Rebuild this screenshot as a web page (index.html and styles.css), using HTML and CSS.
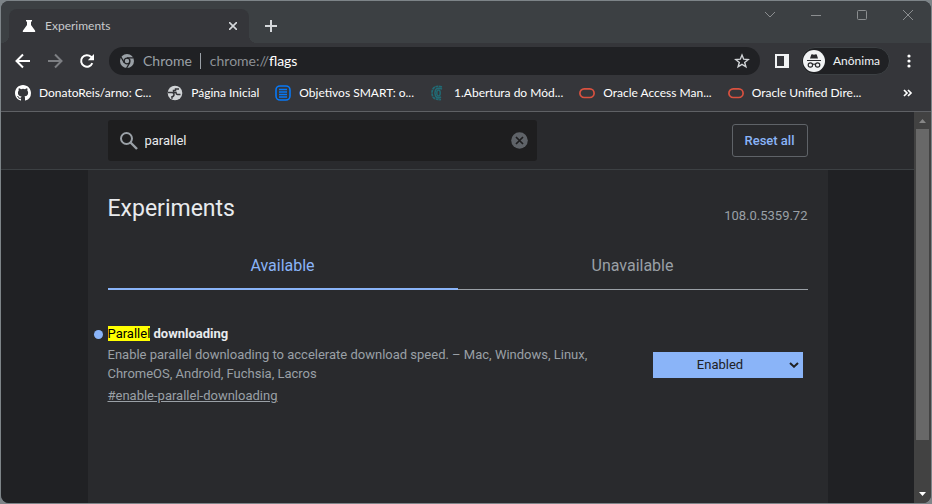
FILE: index.html
```html
<!DOCTYPE html>
<html lang="en">
<head>
<meta charset="utf-8">
<title>Experiments</title>
<link rel="stylesheet" href="styles.css">
</head>
<body>
<div class="window">
  <div class="tabstrip">
    <div class="tab">
      <svg class="tab-icon" width="14" height="14" viewBox="0 0 14 14"><path fill="#fff" d="M4 1h6v1.500H9V6l4 5.500c.6 1 .2 1.500-1 1.500H2c-1.200 0-1.600-.5-1-1.500L5 6V2.500H4z"/></svg>
      <span class="tab-title">Experiments</span>
      <button class="icon-button tab-close" aria-label="Close tab"><svg width="8" height="8" viewBox="0 0 8 8"><path d="M0 0l8 8M8 0L0 8" stroke="#d5d8db" stroke-width="1.600"/></svg></button>
    </div>
    <button class="icon-button new-tab" aria-label="New tab"><svg width="12" height="12" viewBox="0 0 12 12"><path d="M6 0v12M0 6h12" stroke="#d5d8db" stroke-width="2"/></svg></button>
    <div class="window-controls">
      <button class="icon-button" aria-label="Search tabs"><svg width="12" height="12" viewBox="0 0 12 12"><path d="M1 3l5 5 5-5" fill="none" stroke="#8b8e90"/></svg></button>
      <button class="icon-button" aria-label="Minimize"><svg width="12" height="12" viewBox="0 0 12 12"><path d="M1 6.500h10" stroke="#8b8e90"/></svg></button>
      <button class="icon-button" aria-label="Maximize"><svg width="12" height="12" viewBox="0 0 12 12"><rect x="1.500" y="1.500" width="9" height="9" rx="1" fill="none" stroke="#8b8e90"/></svg></button>
      <button class="icon-button" aria-label="Close"><svg width="12" height="12" viewBox="0 0 12 12"><path d="M1 1l10 10M11 1L1 11" stroke="#8b8e90"/></svg></button>
    </div>
  </div>

  <div class="toolbar">
    <div class="nav">
      <button class="icon-button" aria-label="Back"><svg width="16" height="16" viewBox="0 0 16 16"><path d="M15 8H2M8 1.500L1.500 8 8 14.500" fill="none" stroke="#fff" stroke-width="2"/></svg></button>
      <button class="icon-button" aria-label="Forward"><svg width="16" height="16" viewBox="0 0 16 16"><path d="M1 8h13M8 1.500L14.500 8 8 14.500" fill="none" stroke="#7d7f83" stroke-width="2"/></svg></button>
      <button class="icon-button" aria-label="Reload"><svg width="16" height="16" viewBox="0 0 16 16"><path d="M13.300 10.200A5.800 5.800 0 1 1 12 3.800L14 5.800" fill="none" stroke="#fff" stroke-width="2"/><path d="M15 1v6.200H8.800z" fill="#fff"/></svg></button>
    </div>
    <div class="omnibox">
      <svg width="14" height="14" viewBox="0 0 14 14"><circle cx="7" cy="7" r="7" fill="#9aa0a6"/><circle cx="7" cy="7" r="2.900" fill="none" stroke="#202124" stroke-width="1.400"/><path d="M7 3.900h6.500M4.200 8.600L1 3M9.800 8.600L6.600 14" stroke="#202124" stroke-width="1.300"/></svg>
      <span class="site">Chrome</span>
      <span class="divider"></span>
      <span class="url">chrome://<b>flags</b></span>
      <button class="icon-button star" aria-label="Bookmark this page"><svg width="16" height="16" viewBox="0 0 16 16"><path d="M8 2l1.700 4.200 4.500.3-3.500 2.900 1.200 4.400L8 11.400l-3.900 2.400 1.200-4.400L1.800 6.500l4.500-.3z" fill="none" stroke="#d0d3d6" stroke-width="1.400"/></svg></button>
    </div>
    <button class="icon-button side-panel" aria-label="Side panel"><svg width="14" height="14" viewBox="0 0 14 14"><path fill="#f1f3f4" fill-rule="evenodd" d="M0 0h14v14H0zM2 2v10h7V2z"/></svg></button>
    <button class="profile"><svg width="22" height="22" viewBox="0 0 22 22"><circle cx="11" cy="11" r="11" fill="#f1f3f4"/><path d="M7 8.500l1.200-3.800q.2-.7.900-.4l1.900.4 1.900-.4q.7-.3.900.4L15 8.500z" fill="#292a2d"/><path d="M4 10.500h14M9.600 14.500q1.400-1 2.800 0" fill="none" stroke="#292a2d" stroke-width="1.200"/><circle cx="7.400" cy="15" r="2.200" fill="none" stroke="#292a2d" stroke-width="1.200"/><circle cx="14.600" cy="15" r="2.200" fill="none" stroke="#292a2d" stroke-width="1.200"/></svg><span>Anônima</span></button>
    <button class="icon-button menu" aria-label="Menu"><svg width="4" height="14" viewBox="0 0 4 14"><g fill="#fff"><circle cx="2" cy="2" r="1.600"/><circle cx="2" cy="7" r="1.600"/><circle cx="2" cy="12" r="1.600"/></g></svg></button>
  </div>

  <nav class="bookmarks" aria-label="Bookmarks">
    <a class="bookmark" href="#"><svg width="16" height="16" viewBox="0 0 16 16"><path fill="#fff" d="M8 0C3.580 0 0 3.580 0 8c0 3.540 2.290 6.530 5.470 7.590.4.070.55-.17.55-.38 0-.19-.01-.82-.01-1.490-2.010.37-2.530-.49-2.690-.94-.09-.23-.48-.94-.82-1.130-.28-.15-.68-.52-.01-.53.630-.01 1.080.58 1.230.82.720 1.210 1.870.87 2.330.66.070-.52.280-.87.510-1.070-1.780-.2-3.640-.89-3.640-3.950 0-.87.310-1.590.82-2.150-.08-.2-.36-1.020.08-2.120 0 0 .67-.21 2.200.82a7.600 7.600 0 0 1 4 0c1.530-1.040 2.200-.82 2.200-.82.440 1.100.16 1.920.08 2.120.51.560.82 1.270.82 2.150 0 3.070-1.870 3.750-3.650 3.950.29.25.54.73.54 1.480 0 1.070-.01 1.930-.01 2.200 0 .21.150.46.550.38A8 8 0 0 0 16 8c0-4.420-3.580-8-8-8z"/></svg><span>DonatoReis/arno: C...</span></a>
    <a class="bookmark" href="#"><svg width="16" height="16" viewBox="0 0 16 16"><circle cx="8" cy="8" r="7.300" fill="#d0d3d6"/><path fill="none" stroke="#35363a" stroke-width="1.500" d="M1 7.500h3.500q2.500 0 2.500 2t-2 2.200v2M13.500 9.500h-3q-1.500-.2-1.500-2H6.500V5.500h2V4H12"/></svg><span>Página Inicial</span></a>
    <a class="bookmark" href="#"><svg width="16" height="16" viewBox="0 0 16 16"><rect x="1" y="1" width="14" height="14" rx="4" fill="none" stroke="#0878f5" stroke-width="1.600"/><path d="M4 4.500h8M4 7h8M4 9.500h8M4 12h8" stroke="#0878f5" stroke-width="1.300"/></svg><span>Objetivos SMART: o...</span></a>
    <a class="bookmark" href="#"><svg width="16" height="16" viewBox="0 0 16 16"><g fill="none" stroke="#216a74"><path d="M12 2Q5 0 3 4T3 12q2 3 8 2.500" stroke-width="1.700" stroke-dasharray="3 .6"/><path d="M12 4Q7 2 5.500 5C4.700 7 4.700 9 5.500 11q2 3 5.500 1" stroke-width="1.600"/><ellipse cx="8.500" cy="8" rx="1.700" ry="3" stroke-width="1.500"/></g></svg><span>1.Abertura do Mód...</span></a>
    <a class="bookmark" href="#"><svg width="16" height="16" viewBox="0 0 16 16"><rect x=".9" y="3.900" width="14.200" height="8.600" rx="4.300" fill="none" stroke="#d9513f" stroke-width="1.700"/></svg><span>Oracle Access Man...</span></a>
    <a class="bookmark" href="#"><svg width="16" height="16" viewBox="0 0 16 16"><rect x=".9" y="3.900" width="14.200" height="8.600" rx="4.300" fill="none" stroke="#d9513f" stroke-width="1.700"/></svg><span>Oracle Unified Dire...</span></a>
    <button class="icon-button more" aria-label="More bookmarks"><svg width="10" height="8" viewBox="0 0 10 8"><path d="M1 1l3 3-3 3M5 1l3 3-3 3" fill="none" stroke="#fff" stroke-width="1.700"/></svg></button>
  </nav>

  <div class="viewport">
    <div class="page">
      <header class="page-header">
        <div class="header-inner">
          <label class="search">
            <svg width="18" height="18" viewBox="0 0 18 18"><circle cx="6.500" cy="6.500" r="5.500" fill="none" stroke="#9aa0a6" stroke-width="2"/><path d="M10.500 10.500l6.500 6.500" stroke="#9aa0a6" stroke-width="2.400"/></svg>
            <input type="text" value="parallel" aria-label="Search flags">
            <button class="icon-button" aria-label="Clear search"><svg width="17" height="17" viewBox="0 0 17 17"><circle cx="8.500" cy="8.500" r="8.300" fill="#5f6368"/><path d="M5 5l7 7M12 5l-7 7" stroke="#1e1e1f" stroke-width="1.700"/></svg></button>
          </label>
          <button class="reset">Reset all</button>
        </div>
      </header>
      <main class="card">
        <div class="title-row">
          <h1>Experiments</h1>
          <span class="version">108.0.5359.72</span>
        </div>
        <div class="tabs" role="tablist">
          <button class="page-tab selected" role="tab" aria-selected="true">Available</button>
          <button class="page-tab" role="tab" aria-selected="false">Unavailable</button>
        </div>
        <section class="experiment">
          <div class="details">
            <h2><label for="flag-state"><mark>Parallel</mark> downloading</label></h2>
            <p>Enable parallel downloading to accelerate download speed. – Mac, Windows, Linux, ChromeOS, Android, Fuchsia, Lacros</p>
            <a class="permalink" href="#enable-parallel-downloading">#enable-parallel-downloading</a>
          </div>
          <div class="select-wrap">
            <select id="flag-state"><option>Default</option><option selected>Enabled</option><option>Disabled</option></select>
            <svg width="10" height="6" viewBox="0 0 10 6"><path d="M1 .9L5 4.700 9 .9" fill="none" stroke="#202124" stroke-width="2"/></svg>
          </div>
        </section>
      </main>
    </div>
    <div class="scrollbar" aria-hidden="true">
      <svg width="17" height="17" viewBox="0 0 17 17"><path d="M5 11l3.500-4L12 11z" fill="#868686"/></svg>
      <div class="track"><div class="thumb"></div></div>
      <svg width="17" height="17" viewBox="0 0 17 17"><path d="M5 6h7l-3.500 4z" fill="#fff"/></svg>
    </div>
  </div>
</div>
</body>
</html>
```
FILE: styles.css
```css
* { box-sizing: border-box; }

body {
  margin: 0;
  height: 100vh;
  padding: 1px;
  background: #7d8488;
  font-family: Lato, "Open Sans", sans-serif;
  font-size: 12px;
}

button, input, select { font: inherit; }

svg { display: block; flex: none; }

.icon-button {
  display: flex;
  flex: none;
  align-items: center;
  justify-content: center;
  padding: 0;
  border: 0;
  background: none;
}

.window {
  display: flex;
  flex-direction: column;
  height: 100%;
  overflow: hidden;
  border-radius: 8px;
  background: #35363a;
}

/* Tab strip */
.tabstrip {
  display: flex;
  height: 42px;
  padding: 8px 0 0 8px;
  background: #3c4043;
}

.tab {
  position: relative;
  display: flex;
  align-items: center;
  width: 240px;
  padding: 0 12px 0 13px;
  border-radius: 8px 8px 0 0;
  background: #35363a;
}

.tab::before,
.tab::after {
  content: "";
  position: absolute;
  bottom: 0;
  width: 8px;
  height: 8px;
}

.tab::before {
  right: 100%;
  background: radial-gradient(circle at 0 0, transparent 8px, #35363a 8px);
}

.tab::after {
  left: 100%;
  background: radial-gradient(circle at 100% 0, transparent 8px, #35363a 8px);
}

.tab-title { margin-left: 9px; padding-bottom: 2px; color: #c8cacc; }
.tab-close { margin-left: auto; }
.new-tab { width: 44px; }

.window-controls {
  display: flex;
  align-items: flex-start;
  margin-left: auto;
}

.window-controls .icon-button { width: 46px; height: 12px; }

/* Toolbar */
.toolbar {
  display: flex;
  align-items: center;
  height: 36px;
  padding: 0 20px 0 14px;
}

.nav { display: flex; gap: 16px; }

.omnibox {
  display: flex;
  flex: 1;
  align-items: center;
  height: 28px;
  margin-left: 14px;
  padding: 0 10px 0 11px;
  border-radius: 14px;
  background: #202124;
  color: #9aa0a6;
  font-size: 14px;
}

.site { margin-left: 9px; padding-bottom: 2px; }
.divider { width: 1px; height: 16px; margin: 0 9px 0 8px; background: #9aa0a6; }
.url { padding-bottom: 2px; color: #8d9196; }
.url b { color: #fff; font-weight: 400; }
.star { margin-left: auto; }
.side-panel { margin-left: 15px; }

.profile {
  display: flex;
  align-items: center;
  gap: 8px;
  height: 28px;
  margin-left: 12px;
  padding: 0 9px 0 1px;
  border: 1px solid #3c4043;
  border-radius: 14px;
  background: #202124;
  color: #f1f3f4;
}

.profile span { padding-bottom: 2px; }
.menu { margin-left: 17px; }

/* Bookmarks */
.bookmarks {
  display: flex;
  align-items: center;
  gap: 16px;
  height: 33px;
  padding: 0 18px 4px 14px;
  border-bottom: 1px solid #5f6165;
}

.bookmark {
  display: flex;
  flex: none;
  align-items: center;
  gap: 8px;
  color: #fff;
  text-decoration: none;
  white-space: nowrap;
}

.bookmark span { padding-bottom: 2px; }
.more { margin-left: auto; }

/* Page */
.viewport {
  display: flex;
  flex: 1;
  min-height: 0;
}

.page {
  display: flex;
  flex: 1;
  flex-direction: column;
  background: #202124;
  color: #9aa0a6;
  font-family: Roboto, sans-serif;
  font-size: 13px;
}

.page-header {
  padding: 8px 0;
  border-bottom: 1px solid #3c4043;
  background: #292a2d;
}

.header-inner {
  display: flex;
  align-items: center;
  justify-content: space-between;
  max-width: 700px;
  margin: 0 auto;
}

.search {
  display: flex;
  align-items: center;
  width: 429px;
  height: 41px;
  padding: 0 9px 0 12px;
  border-radius: 3px;
  background: #1e1e1f;
}

.search input {
  flex: 1;
  min-width: 0;
  padding: 0 7px;
  border: 0;
  outline: 0;
  background: none;
  color: #e8eaed;
}

.reset {
  height: 33px;
  padding: 0 12px;
  border: 1px solid #5f6368;
  border-radius: 3px;
  background: none;
  color: #8ab4f8;
  font-weight: 500;
}

.card {
  flex: 1;
  width: 100%;
  max-width: 740px;
  margin: 0 auto;
  padding: 24px 20px 0;
  background: #292a2d;
}

.title-row {
  display: flex;
  align-items: flex-end;
  justify-content: space-between;
  height: 30px;
}

h1 {
  align-self: flex-start;
  margin: 0;
  color: #e8eaed;
  font-size: 23px;
  font-weight: 400;
  line-height: 30px;
}

.version { line-height: 16px; }

.tabs { display: flex; margin-top: 16px; }

.page-tab {
  flex: 1;
  height: 50px;
  padding: 2px 0 0;
  border: 0;
  border-bottom: 1px solid #9aa0a6;
  background: none;
  color: #9aa0a6;
  font-size: 16px;
}

.page-tab.selected {
  border-bottom: 2px solid #8ab4f8;
  color: #8ab4f8;
}

.experiment {
  display: flex;
  justify-content: space-between;
  padding: 34px 5px 0 0;
}

.details { width: 500px; }

h2 {
  position: relative;
  margin: 0;
  color: #e8eaed;
  font-size: 13px;
  font-weight: 700;
  line-height: 19px;
}

h2::before {
  content: "";
  position: absolute;
  top: 6px;
  left: -14px;
  width: 9px;
  height: 9px;
  border-radius: 50%;
  background: #8ab4f8;
}

mark { background: #ff0; color: #000; font-weight: 400; }

p { margin: 2px 0 3px; line-height: 19px; }

.permalink { color: #9aa0a6; line-height: 19px; }

.select-wrap {
  position: relative;
  width: 150px;
  height: 26px;
  margin-top: 28px;
}

select {
  width: 100%;
  height: 100%;
  padding: 0 15px 2px 0;
  border: 0;
  appearance: none;
  background: #8ab4f8;
  color: #202124;
  text-align: center;
  text-align-last: center;
}

.select-wrap svg {
  position: absolute;
  top: 10px;
  right: 4px;
  pointer-events: none;
}

.scrollbar {
  display: flex;
  flex-direction: column;
  width: 17px;
  background: #424242;
}

.track { flex: 1; padding: 0 2px; }
.thumb { height: 87%; background: #686868; }
```
